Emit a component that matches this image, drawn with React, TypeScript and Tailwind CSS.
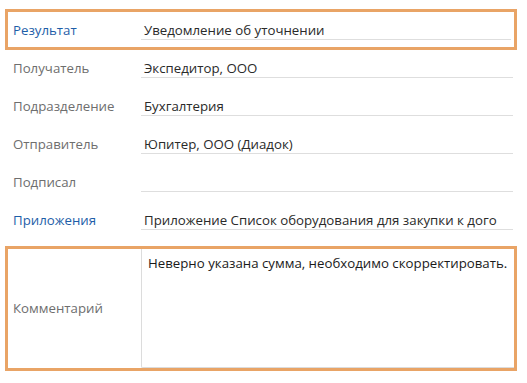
const labelBlue = "text-[#1e5ea8]";
const labelGray = "text-[#6e6e6e]";

type Row = { label: string; value: string; blue?: boolean };

const rows: Row[] = [
  { label: "Получатель", value: "Экспедитор, ООО" },
  { label: "Подразделение", value: "Бухгалтерия" },
  { label: "Отправитель", value: "Юпитер, ООО (Диадок)" },
  { label: "Подписал", value: "" },
  { label: "Приложения", value: "Приложение Список оборудования для закупки к дого", blue: true },
];

function Field({ label, value, blue }: Row) {
  return (
    <div className="flex items-end h-[28px]">
      <div className={`w-[128px] shrink-0 leading-[18px] pb-[1px] ${blue ? labelBlue : labelGray}`}>
        {label}
      </div>
      <div className="flex-1 h-[28px] pt-[9px] leading-[18px] border-b border-[#dedede] pl-[3px] text-[#2a2a2a] whitespace-nowrap overflow-hidden">
        {value}
      </div>
    </div>
  );
}

export default function App() {
  return (
    <div
      className="w-[527px] h-[383px] bg-white pt-[9px] pl-[5px] text-[13.25px]"
      style={{ fontFamily: '"Open Sans", "Noto Sans", sans-serif' }}
    >
      <div className="w-[512px] border-[3px] border-[#e9a466] pl-[5px] pr-[3px] pb-[7px]">
        <Field label="Результат" value="Уведомление об уточнении" blue />
      </div>

      <div className="w-[508px] pl-[8px] flex flex-col gap-[10px]">
        {rows.map((r) => (
          <Field key={r.label} {...r} />
        ))}
      </div>

      <div className="mt-[16px] w-[512px] h-[125px] border-[3px] border-[#e9a466] flex">
        <div className={`w-[133px] shrink-0 pl-[5px] flex items-center ${labelGray}`}>
          Комментарий
        </div>
        <div className="flex-1 border-l border-b border-[#dcdcdc] rounded-bl-[2px] pt-[5px] pl-[6px] leading-[18px] text-[#1a1a1a]">
          Неверно указана сумма, необходимо скорректировать.
        </div>
      </div>
    </div>
  );
}
